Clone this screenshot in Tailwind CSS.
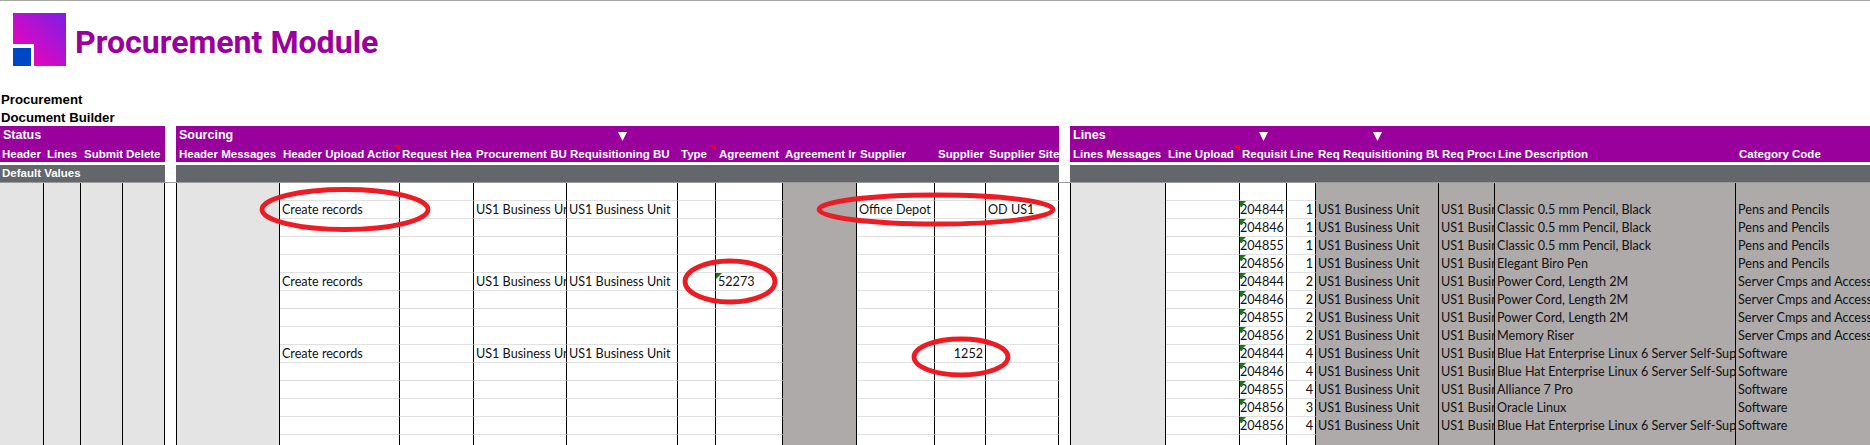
<!DOCTYPE html>
<html>
<head>
<meta charset="utf-8">
<script src="https://cdn.jsdelivr.net/npm/@tailwindcss/browser@4"></script>
</head>
<body class="bg-white overflow-hidden">
<div class="relative w-[1870px] h-[445px] overflow-hidden font-['Liberation_Sans',sans-serif] text-black">
  <div class="h-[1px] bg-[#a6a6a6]"></div>

  <!-- logo + title -->
  <div class="flex items-center h-[80px] pl-[13px] pb-[3px] gap-[9px]">
    <svg width="53" height="53" viewBox="0 0 53 53" class="shrink-0">
      <defs>
        <linearGradient id="logoGrad" x1="1" y1="0" x2="0" y2="1">
          <stop offset="0" stop-color="#7a1fe6"/>
          <stop offset="1" stop-color="#ff00b4"/>
        </linearGradient>
      </defs>
      <path d="M0 0H53V53H21V31H0Z" fill="url(#logoGrad)"/>
      <rect x="0" y="35" width="18" height="18" fill="#0047c8"/>
    </svg>
    <div class="mt-[6px] font-['Roboto',sans-serif] font-bold text-[32.1px] leading-none text-[#99009c]">Procurement Module</div>
  </div>

  <div class="h-[45px] pt-[10px] pl-[1px] font-bold text-[13.2px] leading-[18px]">
    <div>Procurement</div>
    <div>Document Builder</div>
  </div>

  <!-- sheet -->
  <div id="sheet" class="grid grid-cols-[44px_37px_42px_42px_11px_104px_120px_74px_93px_111px_38px_67px_74px_78px_51px_73px_11px_96px_74px_47px_29px_123px_56px_241px_134px] grid-rows-[19px_17px_3px_17px_1px_repeat(15,18px)] text-[#111]"></div>

  <!-- red circles drawn over the sheet -->
  <svg class="absolute left-0 top-0 pointer-events-none" width="1870" height="445" fill="none" stroke="#ed1c24" stroke-width="4.8">
    <ellipse cx="345" cy="209.5" rx="83" ry="20"/>
    <ellipse cx="936" cy="209.5" rx="117" ry="14.5"/>
    <ellipse cx="730" cy="281.5" rx="45" ry="20.5"/>
    <ellipse cx="961" cy="357" rx="47" ry="18"/>
  </svg>
</div>

<script>
  const colCount = 25;
  const sheet = document.getElementById("sheet");

  const headers = ["Header","Lines","Submit","Delete","","Header Messages","Header Upload Action","Request Hea","Procurement BU","Requisitioning BU","Type","Agreement","Agreement Ir","Supplier","Supplier","Supplier Site","","Lines Messages","Line Upload","Requisition","Line","Req Requisitioning BU","Req Procurement","Line Description","Category Code"];
  const arrows = [9, 19, 21];      // columns with a filter arrow
  const redTips = [6, 10, 18];     // header cells with a comment mark
  const gapCols = [4, 16];
  const lightCols = [0, 1, 2, 3, 5, 17];
  const darkCols = [12, 21, 22, 23, 24];
  const leftEdge = [5, 17];
  const tightCols = [0, 7, 8, 12, 18, 19, 21]; // these headings sit 1px further left
  const numberCols = [14, 19, 20];

  function add(cls, html) {
    const d = document.createElement("div");
    d.className = cls;
    d.innerHTML = html || "";
    sheet.appendChild(d);
    return d;
  }

  // title band
  for (let c = 0; c < colCount; c++) {
    if (gapCols.includes(c)) { add("bg-white"); continue; }
    if (arrows.includes(c)) {
      add("bg-[#99009c]", '<svg width="9" height="9" viewBox="0 0 9 9" class="mx-auto mt-[6px]"><path d="M0 0H9L4.5 9Z" fill="#fff"/></svg>');
      continue;
    }
    let label = "";
    if (c === 0) label = "Status";
    if (c === 5) label = "Sourcing";
    if (c === 17) label = "Lines";
    add("bg-[#99009c] text-white font-bold text-[12.5px] leading-[19px] pl-[3px] whitespace-nowrap", label);
  }

  // column headings
  headers.forEach((h, c) => {
    if (gapCols.includes(c)) { add("bg-white"); return; }
    const tip = redTips.includes(c)
      ? '<span class="absolute right-0 top-0 w-0 h-0 border-l-[7px] border-l-transparent border-t-[6px] border-t-[#ff0000]"></span>'
      : "";
    const pad = tightCols.includes(c) ? "pl-[2px]" : "pl-[3px]";
    add("relative bg-[#99009c] text-white font-bold text-[11.5px] leading-[19px] whitespace-nowrap overflow-hidden " + pad, h + tip);
  });

  // white strip
  for (let c = 0; c < colCount; c++) add("bg-white");

  // default values band, the label runs across the four status columns
  add("col-span-4 bg-[#63666a] text-white font-bold text-[11.5px] leading-[17px] pl-[2px] whitespace-nowrap", "Default Values");
  for (let c = 4; c < colCount; c++) {
    add(gapCols.includes(c) ? "bg-white" : "bg-[#63666a]");
  }

  // rule under the band
  for (let c = 0; c < colCount; c++) add("bg-[#9c9c9c]");

  const lines = [
    ["204844", 1, "Classic 0.5 mm Pencil, Black", "Pens and Pencils"],
    ["204846", 1, "Classic 0.5 mm Pencil, Black", "Pens and Pencils"],
    ["204855", 1, "Classic 0.5 mm Pencil, Black", "Pens and Pencils"],
    ["204856", 1, "Elegant Biro Pen", "Pens and Pencils"],
    ["204844", 2, "Power Cord, Length 2M", "Server Cmps and Access"],
    ["204846", 2, "Power Cord, Length 2M", "Server Cmps and Access"],
    ["204855", 2, "Power Cord, Length 2M", "Server Cmps and Access"],
    ["204856", 2, "Memory Riser", "Server Cmps and Access"],
    ["204844", 4, "Blue Hat Enterprise Linux 6 Server Self-Support", "Software"],
    ["204846", 4, "Blue Hat Enterprise Linux 6 Server Self-Support", "Software"],
    ["204855", 4, "Alliance 7 Pro", "Software"],
    ["204856", 3, "Oracle Linux", "Software"],
    ["204856", 4, "Blue Hat Enterprise Linux 6 Server Self-Support", "Software"],
  ];

  const greenTip = '<span class="absolute left-0 top-0 w-0 h-0 border-r-[6px] border-r-transparent border-t-[6px] border-t-[#107c10]"></span>';

  function cellText(r, c) {
    if (r === 1 || r === 5 || r === 9) {
      if (c === 6) return "Create records";
      if (c === 8 || c === 9) return "US1 Business Unit";
    }
    if (r === 1 && c === 13) return "Office Depot";
    if (r === 1 && c === 15) return "OD US1";
    if (r === 5 && c === 11) return greenTip + "52273";
    if (r === 9 && c === 14) return "1252";
    const l = lines[r - 1];
    if (l) {
      if (c === 19) return greenTip + l[0];
      if (c === 20) return String(l[1]);
      if (c === 21) return "US1 Business Unit";
      if (c === 22) return "US1 Business Unit";
      if (c === 23) return l[2];
      if (c === 24) return l[3];
    }
    return "";
  }

  for (let r = 0; r < 15; r++) {
    for (let c = 0; c < colCount; c++) {
      let cls = "relative overflow-hidden whitespace-nowrap font-['Lato',sans-serif] text-[12.6px] leading-[17px] border-r border-r-black";
      if (c === 19) cls += " pl-0 pr-[3px] text-right";
      else if (numberCols.includes(c)) cls += " pl-0 pr-[2px] text-right";
      else cls += " pl-[2px] pr-[1px]";
      if (leftEdge.includes(c)) cls += " border-l border-l-black";
      if (gapCols.includes(c)) cls = "bg-white";
      else if (lightCols.includes(c)) cls += " bg-[#e4e4e4]";
      else if (darkCols.includes(c)) cls += " bg-[#aeaaa9]";
      else cls += " bg-white border-b border-b-[#e0e0e0]";
      if (c === 24) cls += " border-r-0";
      add(cls, cellText(r, c));
    }
  }
</script>
</body>
</html>
